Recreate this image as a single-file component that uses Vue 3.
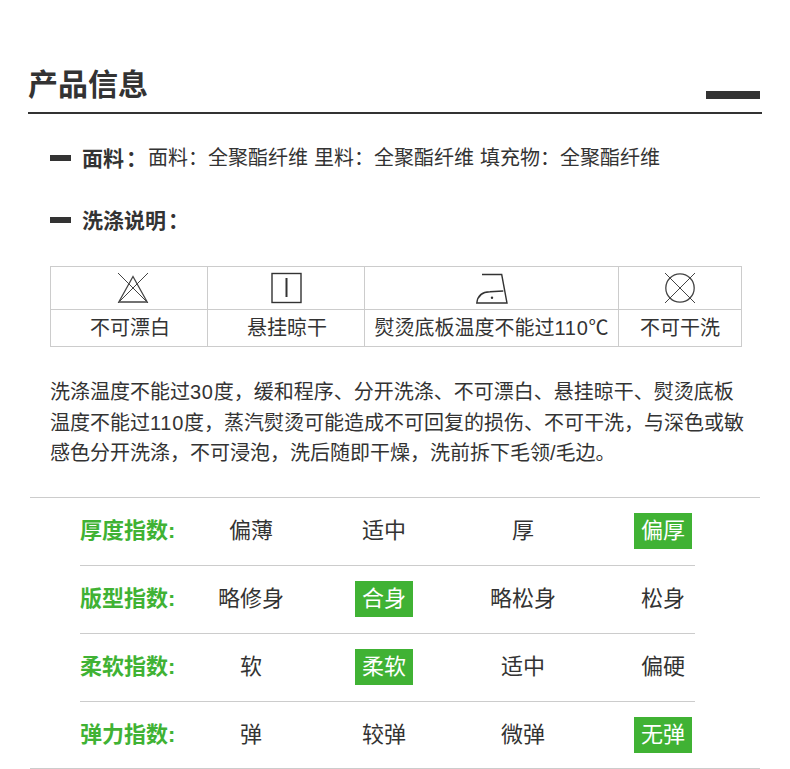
<script setup>
const symbols = [
  { name: 'bleach', label: '不可漂白' },
  { name: 'hang', label: '悬挂晾干' },
  { name: 'iron', pre: '熨烫底板温度不能过', num: '110', post: '℃' },
  { name: 'dry', label: '不可干洗' }
]
const rows = [
  { label: '厚度指数:', items: ['偏薄', '适中', '厚', '偏厚'], active: 3 },
  { label: '版型指数:', items: ['略修身', '合身', '略松身', '松身'], active: 1 },
  { label: '柔软指数:', items: ['软', '柔软', '适中', '偏硬'], active: 1 },
  { label: '弹力指数:', items: ['弹', '较弹', '微弹', '无弹'], active: 3 }
]
</script>

<template>
  <main class="page">
    <header class="head">
      <h1>产品信息</h1>
      <span class="head-block"></span>
    </header>

    <p class="spec first"><span class="dash"></span><b>面料<i>：</i></b><span class="spec-text">面料：全聚酯纤维 里料：全聚酯纤维 填充物：全聚酯纤维</span></p>
    <p class="spec second"><span class="dash"></span><b>洗涤说明<i>：</i></b></p>

    <table class="care">
      <colgroup>
        <col class="c-bleach" />
        <col class="c-hang" />
        <col class="c-iron" />
        <col />
      </colgroup>
      <tbody>
        <tr class="icons">
          <td v-for="s in symbols" :key="s.name" :class="'i-' + s.name">
            <svg v-if="s.name === 'bleach'" width="32" height="32" viewBox="0 0 32 32" fill="none" stroke="#444" stroke-width="1">
              <path d="M16 4.5 L1.8 30 H30.2 Z" stroke-width="1.3" />
              <path d="M1 1 L31 31 M31 1 L1 31" />
            </svg>
            <svg v-else-if="s.name === 'hang'" width="32" height="32" viewBox="0 0 32 32" fill="none" stroke="#333">
              <rect x="2" y="1.5" width="29" height="29" stroke-width="1.4" />
              <path d="M16.5 6 V25" stroke-width="2" />
            </svg>
            <svg v-else-if="s.name === 'iron'" width="32" height="32" viewBox="0 0 32 32" fill="none" stroke="#333" stroke-width="1.4">
              <path d="M6 2.5 H25.7 L31 31 H0.8 C1.6 24 6 20 14 19.8 L27.3 19" />
              <circle cx="16" cy="25.7" r="1.2" fill="#333" stroke="none" />
            </svg>
            <svg v-else width="32" height="32" viewBox="0 0 32 32" fill="none" stroke="#444" stroke-width="1">
              <circle cx="16" cy="16" r="14.2" stroke-width="1.3" />
              <path d="M1 1 L31 31 M31 1 L1 31" />
            </svg>
          </td>
        </tr>
        <tr class="labels">
          <td v-for="s in symbols" :key="s.name">
            <template v-if="s.num">{{ s.pre }}<span class="num">{{ s.num }}</span>{{ s.post }}</template>
            <template v-else>{{ s.label }}</template>
          </td>
        </tr>
      </tbody>
    </table>

    <div class="desc">
      <p>洗涤温度不能过<span class="num">30</span>度，缓和程序、分开洗涤、不可漂白、悬挂晾干、熨烫底板</p>
      <p>温度不能过<span class="num">110</span>度，蒸汽熨烫可能造成不可回复的损伤、不可干洗，与深色或敏</p>
      <p>感色分开洗涤，不可浸泡，洗后随即干燥，洗前拆下毛领/毛边。</p>
    </div>

    <section class="index">
      <div v-for="r in rows" :key="r.label" class="row">
        <div class="row-label">{{ r.label }}</div>
        <div v-for="(item, i) in r.items" :key="item" class="cell">
          <span :class="['val', { on: i === r.active }]">{{ item }}</span>
        </div>
      </div>
    </section>
  </main>
</template>

<style>
html, body { margin: 0; background: #fff; }
</style>

<style scoped>
.page {
  width: 790px;
  height: 769px;
  overflow: hidden;
  box-sizing: border-box;
  padding-top: 62px;
  color: #333;
  font-family: "Liberation Sans", "Noto Sans CJK SC", sans-serif;
  font-size: 20px;
}
.head {
  margin: 0 28px;
  height: 50px;
  border-bottom: 2px solid #333;
  display: flex;
  justify-content: space-between;
  align-items: flex-end;
}
h1 {
  margin: 0 0 5px;
  font-size: 30px;
  line-height: 44px;
  height: 44px;
  font-weight: 700;
}
.head-block {
  width: 54px;
  height: 8px;
  margin: 0 2px 13px 0;
  background: #333;
}
.spec {
  margin: 0 0 0 50px;
  height: 30px;
  line-height: 30px;
  display: flex;
  align-items: center;
  white-space: pre;
}
.spec.first { margin-top: 29px; }
.spec.second { margin-top: 32px; }
.spec b {
  font-size: 21px;
  font-weight: 700;
  width: 66px;
  margin-top: 2px;
  white-space: nowrap;
}
.spec b i { font-style: normal; margin-left: 2px; }
.spec-text { word-spacing: 0.4px; }
.dash {
  width: 21px;
  height: 6px;
  margin-right: 11px;
  background: #333;
}
.care {
  margin: 31px 0 0 50px;
  width: 692px;
  table-layout: fixed;
  border-collapse: collapse;
  text-align: center;
}
.c-bleach { width: 157px; }
.c-hang { width: 157px; }
.c-iron { width: 254px; }
.care td {
  border: 1px solid #ccc;
  padding: 0;
}
.icons td { height: 42px; }
.icons svg { display: block; margin: 0 auto; }
.icons .i-bleach { padding-left: 7px; }
.labels td {
  height: 36px;
  padding-top: 1px;
  box-sizing: border-box;
  line-height: 35px;
  white-space: nowrap;
}
.labels td:nth-child(-n+2) { padding-left: 2px; }
.num { letter-spacing: 0.7px; }
.desc {
  margin: 30px 0 0 50px;
}
.desc p {
  margin: 0;
  line-height: 30.5px;
  white-space: nowrap;
}
.index {
  margin: 28px 30px 0;
  border-top: 1px solid #ccc;
  border-bottom: 1px solid #ccc;
  height: 270px;
  padding: 0 50px;
  font-size: 22px;
}
.row {
  width: 615px;
  height: 68px;
  box-sizing: border-box;
  border-bottom: 1px solid #ccc;
  display: grid;
  grid-template-columns: 104px 134px 132px 146px 134px;
  align-items: center;
}
.row:last-child { border-bottom-color: transparent; }
.row-label {
  color: #40b234;
  font-weight: 700;
  line-height: 36px;
  white-space: nowrap;
}
.cell { text-align: center; }
.val {
  display: inline-block;
  height: 36px;
  line-height: 36px;
  padding: 0 7px;
  white-space: nowrap;
}
.val.on {
  color: #fff;
  background: #40b234;
}
</style>
